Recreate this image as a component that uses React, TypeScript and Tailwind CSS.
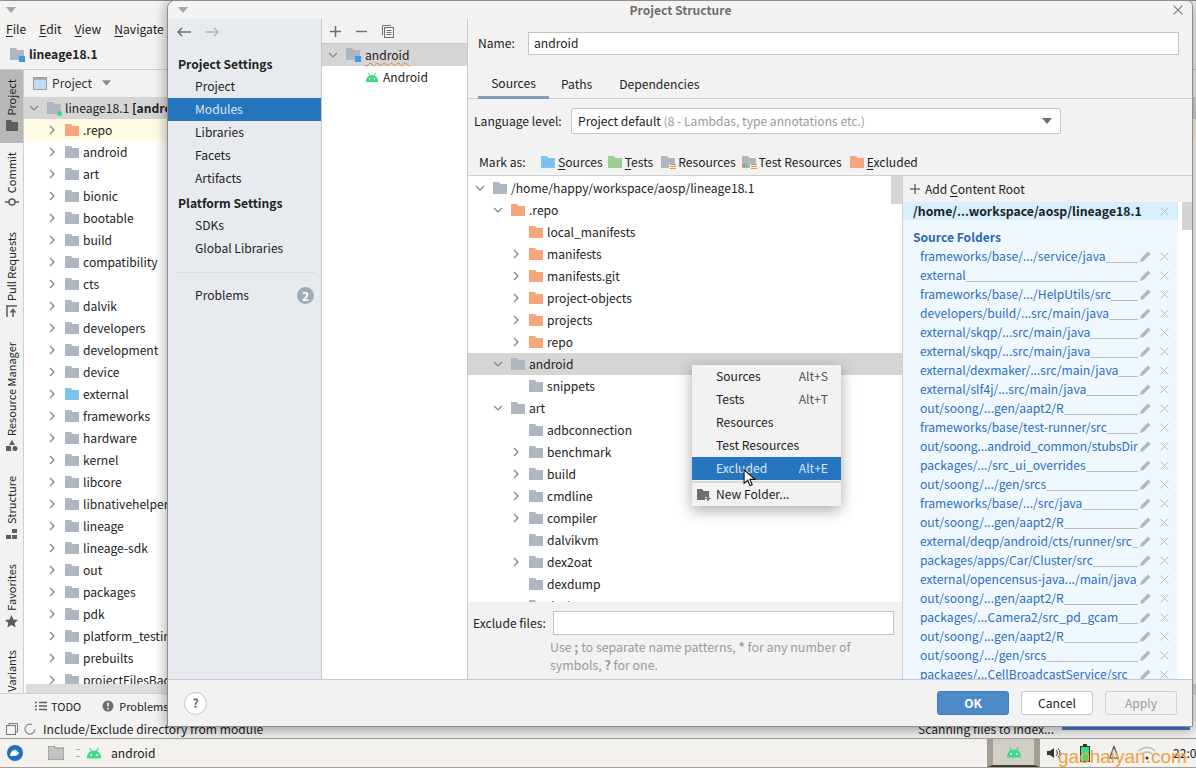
import React from 'react';

function Chevron({ open = false }: { open?: boolean }) {
  return (
    <svg width="10" height="10" viewBox="0 0 10 10" className="shrink-0">
      <path d={open ? 'M1 3l4 4 4-4' : 'M3 1l4 4-4 4'} fill="none" stroke="#7f8488" strokeWidth="1.2" />
    </svg>
  );
}

function Folder({ tone = 'gray' }: { tone?: 'gray' | 'orange' | 'blue' | 'green' }) {
  const fill = { gray: '#afb8c1', orange: '#f6a67c', blue: '#7fc5ee', green: '#9dcd92' }[tone];
  return (
    <svg width="14" height="12" viewBox="0 0 14 12" className="shrink-0">
      <path d="M0 0h6l1.5 2H14v10H0z" fill={fill} />
      {tone === 'blue' && <path d="M2 4h1M5 4h1M8 4h1M11 4h1M3.500 6.500h1M6.500 6.500h1M9.500 6.500h1M2 9h1M5 9h1M8 9h1M11 9h1" stroke="#5aa9dc" strokeWidth="1" />}
    </svg>
  );
}

function ResFolder({ test = false }: { test?: boolean }) {
  return (
    <svg width="14" height="12" viewBox="0 0 14 12" className="shrink-0 overflow-visible">
      <path d="M0 0h6l1.5 2H14v6H8v4H0z" fill="#afb8c1" />
      <path d="M9 8.500h6M9 10.500h6M9 12.500h6" stroke="#e8923c" strokeWidth="1" />
      {test && <path d="M4 7l3 2.500-3 2.500z" fill="#3ddc84" />}
      {test && <path d="M3 7L0 9.500 3 12z" fill="#e8763c" />}
    </svg>
  );
}

function ModuleIcon() {
  return (
    <svg width="15" height="14" viewBox="0 0 15 14" className="shrink-0">
      <path d="M0 0h6l1.5 2H14v10H0z" fill="#afb8c1" />
      <rect x="9" y="8" width="6" height="6" fill="#3d9ae8" />
    </svg>
  );
}

function Android({ size = 14 }: { size?: number }) {
  return (
    <svg width={size} height={size * 0.72} viewBox="0 0 18 13" className="shrink-0">
      <path d="M1 13C1 8 4 4 9 4s8 4 8 9z" fill="#3ddc84" />
      <path d="M4 1l2.5 4M14 1l-2.5 4" stroke="#3ddc84" strokeWidth="1.2" />
      <circle cx="5.8" cy="9" r="1" fill="#fff" />
      <circle cx="12.2" cy="9" r="1" fill="#fff" />
    </svg>
  );
}

function Pencil() {
  return (
    <svg width="11" height="11" viewBox="0 0 11 11" className="shrink-0">
      <path d="M0 11l1-3.5L8 .5 10.500 3l-7 7z" fill="#b5b8ba" />
    </svg>
  );
}

function Cross({ size = 9, color = '#b9bdc0' }: { size?: number; color?: string }) {
  return (
    <svg width={size} height={size} viewBox="0 0 9 9" className="shrink-0">
      <path d="M.5.5l8 8M8.500.5l-8 8" stroke={color} strokeWidth="1" />
    </svg>
  );
}

const projectItems = [
  '.repo', 'android', 'art', 'bionic', 'bootable', 'build', 'compatibility', 'cts', 'dalvik', 'developers',
  'development', 'device', 'external', 'frameworks', 'hardware', 'kernel', 'libcore', 'libnativehelper', 'lineage',
  'lineage-sdk', 'out', 'packages', 'pdk', 'platform_testing', 'prebuilts', 'projectFilesBackup',
];

const sideTabs = [
  { label: 'Project', h: 'h-[73px] bg-[#b8b8b8]', icon: <svg width="12" height="11" viewBox="0 0 12 11"><path d="M0 0h5l1 2h6v9H0z" fill="#5d5d5d" /></svg> },
  { label: 'Commit', h: 'h-[80px]', icon: <svg width="14" height="10" viewBox="0 0 14 10"><circle cx="7" cy="5" r="3" fill="none" stroke="#5d5d5d" strokeWidth="1.500" /><path d="M0 5h4M10 5h4" stroke="#5d5d5d" strokeWidth="1.500" /></svg> },
  { label: 'Pull Requests', h: 'h-[110px]', icon: <svg width="12" height="12" viewBox="0 0 12 12"><path d="M1 0v12M1 1h10M7 12V5M4.500 7.500L7 4.500l2.500 3" fill="none" stroke="#5d5d5d" strokeWidth="1.500" /></svg> },
  { label: 'Resource Manager', h: 'h-[134px]', icon: <svg width="12" height="12" viewBox="0 0 12 12"><path d="M6 0l3 5H3z" fill="#5d5d5d" /><rect x="0" y="6" width="5" height="5" fill="#5d5d5d" /><circle cx="9" cy="8.500" r="2.500" fill="#5d5d5d" /></svg> },
  { label: 'Structure', h: 'h-[88px]', icon: <svg width="12" height="12" viewBox="0 0 12 12"><rect x="6" y="1" width="5" height="4" fill="#5d5d5d" /><rect x="0" y="7" width="5" height="4" fill="#5d5d5d" /><rect x="6" y="7" width="5" height="4" fill="#5d5d5d" /></svg> },
  { label: 'Favorites', h: 'h-[86px]', icon: <svg width="13" height="13" viewBox="0 0 13 13"><path d="M6.500 0l2 4.500 4.500.5-3.300 3 1 4.500-4.200-2.400L2.300 12.500l1-4.500L0 5l4.500-.5z" fill="#5d5d5d" /></svg> },
  { label: 'Variants', h: 'h-[52px]', icon: null },
];

type Node = { name: string; depth: 0 | 1 | 2; tone: 'gray' | 'orange'; arrow?: 'open' | 'closed'; active?: boolean };

const contentTree: Node[] = [
  { name: '/home/happy/workspace/aosp/lineage18.1', depth: 0, tone: 'gray', arrow: 'open' },
  { name: '.repo', depth: 1, tone: 'orange', arrow: 'open' },
  { name: 'local_manifests', depth: 2, tone: 'orange' },
  { name: 'manifests', depth: 2, tone: 'orange', arrow: 'closed' },
  { name: 'manifests.git', depth: 2, tone: 'orange', arrow: 'closed' },
  { name: 'project-objects', depth: 2, tone: 'orange', arrow: 'closed' },
  { name: 'projects', depth: 2, tone: 'orange', arrow: 'closed' },
  { name: 'repo', depth: 2, tone: 'orange', arrow: 'closed' },
  { name: 'android', depth: 1, tone: 'gray', arrow: 'open', active: true },
  { name: 'snippets', depth: 2, tone: 'gray' },
  { name: 'art', depth: 1, tone: 'gray', arrow: 'open' },
  { name: 'adbconnection', depth: 2, tone: 'gray' },
  { name: 'benchmark', depth: 2, tone: 'gray', arrow: 'closed' },
  { name: 'build', depth: 2, tone: 'gray', arrow: 'closed' },
  { name: 'cmdline', depth: 2, tone: 'gray', arrow: 'closed' },
  { name: 'compiler', depth: 2, tone: 'gray', arrow: 'closed' },
  { name: 'dalvikvm', depth: 2, tone: 'gray' },
  { name: 'dex2oat', depth: 2, tone: 'gray', arrow: 'closed' },
  { name: 'dexdump', depth: 2, tone: 'gray' },
  { name: 'dexlayout', depth: 2, tone: 'gray' },
];

const sourceFolders = [
  'frameworks/base/.../service/java', 'external', 'frameworks/base/.../HelpUtils/src', 'developers/build/...src/main/java',
  'external/skqp/...src/main/java', 'external/skqp/...src/main/java', 'external/dexmaker/...src/main/java',
  'external/slf4j/...src/main/java', 'out/soong/...gen/aapt2/R', 'frameworks/base/test-runner/src',
  'out/soong...android_common/stubsDir', 'packages/.../src_ui_overrides', 'out/soong/.../gen/srcs',
  'frameworks/base/.../src/java', 'out/soong/...gen/aapt2/R', 'external/deqp/android/cts/runner/src',
  'packages/apps/Car/Cluster/src', 'external/opencensus-java.../main/java', 'out/soong/...gen/aapt2/R',
  'packages/...Camera2/src_pd_gcam', 'out/soong/...gen/aapt2/R', 'out/soong/.../gen/srcs',
  'packages/...CellBroadcastService/src',
];

function Mnemonic({ text }: { text: string }) {
  return (
    <span>
      <span className="underline underline-offset-2">{text[0]}</span>
      {text.slice(1)}
    </span>
  );
}

function ProjectPanel() {
  return (
    <div className="relative flex-1 min-w-0 bg-white flex flex-col">
      <div className="h-[27px] shrink-0 bg-[#f2f2f2] flex items-center pl-[9px] pb-[1px] gap-[5px] text-[#333]">
        <svg width="14" height="13" viewBox="0 0 14 13"><rect x=".5" y=".5" width="13" height="12" fill="#bfe0f3" stroke="#9aa0a6" /><rect x="1" y="1" width="12" height="2" fill="#a5abb0" /></svg>
        <span>Project</span>
        <svg width="9" height="6" viewBox="0 0 10 6" className="ml-[5px]"><path d="M0 0h10L5 6z" fill="#8c8c8c" /></svg>
      </div>
      <div className="h-[22px] shrink-0 bg-[#d5d5d5] flex items-center pl-[5px]">
        <Chevron open />
        <span className="relative ml-[8px] mr-[4px]">
          <Folder />
          <span className="absolute -right-[1px] -bottom-[2px] size-[5px] rounded-full bg-[#3ddc84]" />
        </span>
        <span className="whitespace-nowrap">lineage18.1 <b>[android]</b></span>
      </div>
      {projectItems.map((name, i) => (
        <div key={name} className={`h-[22px] shrink-0 flex items-center pl-[23px] ${i === 0 ? 'bg-[#fffbe3]' : ''}`}>
          <Chevron />
          <span className="ml-[8px] mr-[4px]"><Folder tone={name === '.repo' ? 'orange' : name === 'external' ? 'blue' : 'gray'} /></span>
          <span className="whitespace-nowrap">{name}</span>
        </div>
      ))}
      <div className="absolute left-[2px] right-0 bottom-0 h-[9px] bg-[#dddddd]" />
    </div>
  );
}

function ContextMenu() {
  const rows = [
    { label: 'Sources', key: 'Alt+S' },
    { label: 'Tests', key: 'Alt+T' },
    { label: 'Resources', key: '' },
    { label: 'Test Resources', key: '' },
    { label: 'Excluded', key: 'Alt+E', active: true },
  ];
  return (
    <div className="absolute left-[524px] top-[364px] w-[149px] bg-[#f2f2f2] shadow-[0_4px_14px_rgba(0,0,0,0.35)] z-20">
      {rows.map((r) => (
        <div key={r.label} className={`h-[23px] flex items-center justify-between pl-[24px] pr-[13px] ${r.active ? 'bg-[#2675bf] text-[#dbe7f3]' : 'text-[#222]'}`}>
          <span>{r.label}</span>
          <span className={r.active ? '' : 'text-[#555]'}>{r.key}</span>
        </div>
      ))}
      <div className="h-[2px] mt-[1px] bg-[#d8d8d8]" />
      <div className="h-[23px] flex items-center pl-[5px] gap-[5px]">
        <svg width="14" height="12" viewBox="0 0 14 12" className="shrink-0"><path d="M0 0h5l1.500 2H12v6H8v3H0z" fill="#6e6e6e" /><path d="M11 7v5M8.500 9.500h5" stroke="#6e6e6e" strokeWidth="1.500" /></svg>
        <span>New Folder...</span>
      </div>
      <svg width="13" height="18" viewBox="0 0 14 20" className="absolute left-[51px] top-[104px]">
        <path d="M1 1v15l4-3.500 2.500 6 2.500-1-2.500-6H13z" fill="#fff" stroke="#111" strokeWidth="1.200" />
      </svg>
    </div>
  );
}

function Dialog() {
  return (
    <div className="absolute left-[167px] top-0 w-[1026px] h-[727px] flex flex-col bg-[#f2f2f2] border border-[#8e8e8e] rounded-tl-[8px] rounded-tr-[6px] shadow-[0_2px_14px_rgba(0,0,0,0.4)] z-10">
      <div className="h-[18px] shrink-0 flex items-center justify-between pl-[10px] pr-[9px] bg-[#f5f3f1] rounded-t-[8px]">
        <svg width="10" height="6" viewBox="0 0 10 6"><path d="M0 0h10L5 6z" fill="#a5a5a5" /></svg>
        <span className="font-bold text-[#6e6e6e]">Project Structure</span>
        <Cross size={10} color="#7b7b7b" />
      </div>
      <div className="flex-1 min-h-0 flex">
        <div className="w-[154px] shrink-0 bg-[#e7ebf0] border-r border-[#c9c9c9] flex flex-col">
          <div className="h-[28px] pb-[2px] flex items-center pl-[9px] gap-[14px]">
            <svg width="14" height="10" viewBox="0 0 14 10"><path d="M14 5H1M5 1L1 5l4 4" fill="none" stroke="#6f6f6f" strokeWidth="1.500" /></svg>
            <svg width="14" height="10" viewBox="0 0 14 10"><path d="M0 5h13M9 1l4 4-4 4" fill="none" stroke="#b5b5b5" strokeWidth="1.500" /></svg>
          </div>
          <div className="pl-[10px] mt-[6px] h-[22px] flex items-center font-bold">Project Settings</div>
          {['Project', 'Modules', 'Libraries', 'Facets', 'Artifacts'].map((n) => (
            <div key={n} className={`h-[23px] flex items-center pl-[27px] ${n === 'Modules' ? 'bg-[#2675bf] text-[#dbe7f3]' : ''}`}>{n}</div>
          ))}
          <div className="pl-[10px] mt-[2px] h-[22px] flex items-center font-bold">Platform Settings</div>
          {['SDKs', 'Global Libraries'].map((n) => (
            <div key={n} className="h-[23px] flex items-center pl-[27px]">{n}</div>
          ))}
          <div className="mx-[6px] mt-[12px] h-px bg-[#dcdcdc]" />
          <div className="h-[23px] mt-[11px] flex items-center justify-between pl-[27px] pr-[7px]">
            <span>Problems</span>
            <span className="size-[17px] rounded-full bg-[#9fabb8] text-white font-bold text-[12px] flex items-center justify-center">2</span>
          </div>
        </div>
        <div className="w-[146px] shrink-0 bg-white border-r border-[#c9c9c9] flex flex-col">
          <div className="h-[25px] shrink-0 bg-[#f2f2f2] border-b border-[#c9c9c9] flex items-center pl-[8px] gap-[15px]">
            <svg width="11" height="11" viewBox="0 0 11 11"><path d="M5.500 0v11M0 5.500h11" stroke="#6e6e6e" strokeWidth="1.500" /></svg>
            <svg width="11" height="11" viewBox="0 0 11 11"><path d="M0 5.500h11" stroke="#6e6e6e" strokeWidth="1.500" /></svg>
            <svg width="12" height="13" viewBox="0 0 12 13"><path d="M.5 10V.5H9" fill="none" stroke="#6e6e6e" /><rect x="2.500" y="2.500" width="9" height="10" fill="none" stroke="#6e6e6e" /><path d="M4.500 5.500h5M4.500 7.500h5M4.500 9.500h5" stroke="#6e6e6e" /></svg>
          </div>
          <div className="h-[22px] bg-[#d5d5d5] flex items-center pl-[6px] gap-[9px]">
            <Chevron open />
            <span className="flex items-center gap-[4px] -ml-[1px]">
              <ModuleIcon />
              <span className="underline decoration-wavy decoration-[#e0803c] decoration-1 underline-offset-2">android</span>
            </span>
          </div>
          <div className="h-[22px] flex items-center pl-[43px] gap-[4px]">
            <Android />
            <span>Android</span>
          </div>
        </div>
        <div className="flex-1 min-w-0 flex flex-col">
          <div className="h-[49px] shrink-0 flex items-center pl-[10px] pr-[13px] gap-[11px]">
            <span className="w-[39px]">Name:</span>
            <div className="flex-1 h-[23px] bg-white border border-[#c4c4c4] flex items-center px-[5px]">android</div>
          </div>
          <div className="h-[31px] shrink-0 border-b border-[#cfcfcf] flex items-end pl-[10px] gap-[12px]">
            <div className="h-[28px] w-[71px] border-b-[3px] border-[#7f9cc0] flex items-center justify-center -mb-px">Sources</div>
            <div className="h-[28px] flex items-center mr-[15px]">Paths</div>
            <div className="h-[28px] flex items-center">Dependencies</div>
          </div>
          <div className="h-[44px] shrink-0 flex items-center pl-[6px]">
            <span className="w-[97px]">Language level:</span>
            <div className="w-[490px] h-[26px] bg-white border border-[#c4c4c4] rounded-[2px] flex items-center justify-between pl-[6px] pr-[8px]">
              <span>Project default <span className="text-[#9a9a9a]">(8 - Lambdas, type annotations etc.)</span></span>
              <svg width="10" height="6" viewBox="0 0 10 6"><path d="M0 0h10L5 6z" fill="#6e6e6e" /></svg>
            </div>
          </div>
          <div className="h-[33px] pt-[6px] shrink-0 border-b border-[#cfcfcf] flex items-center pl-[11px]">
            <span className="w-[62px]">Mark as:</span>
            <span className="flex items-center gap-[3px] mr-[5px]"><Folder tone="blue" /><Mnemonic text="Sources" /></span>
            <span className="flex items-center gap-[3px] mr-[8px]"><Folder tone="green" /><Mnemonic text="Tests" /></span>
            <span className="flex items-center gap-[3px] mr-[6px]"><ResFolder />Resources</span>
            <span className="flex items-center gap-[3px] mr-[8px]"><ResFolder test />Test Resources</span>
            <span className="flex items-center gap-[3px]"><Folder tone="orange" /><Mnemonic text="Excluded" /></span>
          </div>
          <div className="flex-1 min-h-0 flex">
            <div className="w-[435px] shrink-0 flex flex-col border-r border-[#cfcfcf]">
              <div className="relative flex-1 min-h-0 bg-white overflow-hidden pt-[1px]">
                {contentTree.map((n) => (
                  <div key={n.name} className={`h-[22px] flex items-center ${n.active ? 'bg-[#d5d5d5]' : ''} ${n.depth === 0 ? 'pl-[7px]' : n.depth === 1 ? 'pl-[25px]' : 'pl-[43px]'}`}>
                    <span className="w-[10px] shrink-0">{n.arrow && <Chevron open={n.arrow === 'open'} />}</span>
                    <span className="ml-[8px] mr-[4px]"><Folder tone={n.tone} /></span>
                    <span className="whitespace-nowrap">{n.name}</span>
                  </div>
                ))}
                <div className="absolute right-0 top-0 w-[11px] h-[28px] bg-[#d4d4d4]" />
              </div>
              <div className="h-[77px] shrink-0 bg-[#f2f2f2]">
                <div className="h-[40px] flex items-center pl-[5px] pr-[8px] gap-[5px] pt-[2px]">
                  <span className="w-[75px]">Exclude files:</span>
                  <div className="flex-1 h-[24px] bg-white border border-[#c4c4c4]" />
                </div>
                <div className="pl-[82px] -mt-[4px] text-[#9a9a9a] text-[12.4px] leading-[18px]">
                  Use <b>;</b> to separate name patterns, <b>*</b> for any number of<br />symbols, <b>?</b> for one.
                </div>
              </div>
            </div>
            <div className="flex-1 min-w-0 flex flex-col">
              <div className="h-[26px] shrink-0 flex items-center pl-[7px] gap-[5px]">
                <svg width="10" height="10" viewBox="0 0 10 10"><path d="M5 0v10M0 5h10" stroke="#6e6e6e" strokeWidth="1.500" /></svg>
                <span>Add <span className="underline underline-offset-2">C</span>ontent Root</span>
              </div>
              <div className="flex-1 min-h-0 flex bg-white">
                <div className="w-[275px] shrink-0 bg-[#f0f8ff] overflow-hidden">
                  <div className="h-[18px] bg-[#d7eefc] flex items-center justify-between pl-[10px] pr-[9px] font-bold text-[#222] text-[12.3px]">
                    <span>/home/...workspace/aosp/lineage18.1</span>
                    <Cross />
                  </div>
                  <div className="h-[26px] flex items-end pl-[10px] font-bold text-[#2a68b4]">Source Folders</div>
                  <div className="pt-[1px]">
                    {sourceFolders.map((s, i) => (
                      <div key={i} className="h-[19px] flex items-center pl-[17px] pr-[9px] text-[#2a6fc0]">
                        <span className="flex-1 min-w-0 flex items-end overflow-hidden">
                          <span className={`whitespace-nowrap ${s.includes('stubsDir') ? 'tracking-[-0.12px]' : ''}`}>{s}</span>
                          <span className="flex-1 border-b border-[#bcbcbc] mb-[3px]" />
                        </span>
                        <span className="ml-[2px]"><Pencil /></span>
                        <span className="ml-[9px]"><Cross /></span>
                      </div>
                    ))}
                  </div>
                </div>
                <div className="flex-1 bg-white pl-[4px]"><div className="h-[28px] bg-[#d4d4d4]" /></div>
              </div>
            </div>
          </div>
        </div>
      </div>
      <div className="h-[47px] shrink-0 bg-[#f2f2f2] border-t border-[#c9c9c9] flex items-center pl-[16px] pr-[15px]">
        <span className="size-[23px] rounded-full bg-white border border-[#c4c4c4] flex items-center justify-center font-bold text-[#666]">?</span>
        <span className="ml-auto w-[72px] h-[24px] rounded-[3px] bg-[#4d8ac9] border border-[#3f7cbc] text-white font-bold flex items-center justify-center">OK</span>
        <span className="ml-[12px] w-[72px] h-[24px] rounded-[3px] bg-white border border-[#c4c4c4] flex items-center justify-center">Cancel</span>
        <span className="ml-[12px] w-[72px] h-[24px] rounded-[3px] border border-[#cfcfcf] text-[#9a9a9a] flex items-center justify-center">Apply</span>
      </div>
      <ContextMenu />
    </div>
  );
}

export default function App() {
  return (
    <div className="relative w-[1196px] h-[768px] overflow-hidden bg-[#f2f2f2] text-[12.1px] text-[#222] font-['Noto_Sans_CJK_SC','Noto_Sans',sans-serif] flex flex-col">
      <div className="h-[17px] shrink-0 bg-[#f5f3f1] border-t border-[#8e8e8e] pl-[6px] pt-[6px]">
        <svg width="10" height="6" viewBox="0 0 10 6"><path d="M0 0h10L5 6z" fill="#a5a5a5" /></svg>
      </div>
      <div className="h-[25px] shrink-0 bg-[#f5f3f1] flex items-center pl-[6px] gap-[13px]">
        {['File', 'Edit', 'View', 'Navigate'].map((m) => <Mnemonic key={m} text={m} />)}
      </div>
      <div className="h-[28px] pb-[2px] shrink-0 bg-[#f2f2f2] border-b border-[#cfcfcf] flex items-center pl-[10px] gap-[4px] font-bold">
        <ModuleIcon />
        <span>lineage18.1</span>
      </div>
      <div className="flex-1 min-h-0 flex">
        <div className="w-[24px] shrink-0 border-r border-[#cfcfcf] text-[11px] overflow-hidden">
          {sideTabs.map((t) => (
            <div key={t.label} className={`${t.h} flex flex-col items-center pt-[9px] gap-[4px]`}>
              <span className="[writing-mode:vertical-rl] rotate-180 whitespace-nowrap">{t.label}</span>
              {t.icon}
            </div>
          ))}
        </div>
        <ProjectPanel />
      </div>
      <div className="h-[25px] shrink-0 border-t border-[#cfcfcf] flex items-center pl-[35px] text-[11px]">
        <svg width="12" height="10" viewBox="0 0 12 10" className="mr-[4px]"><path d="M0 1.500h2M4 1.500h8M0 5h2M4 5h8M0 8.500h2M4 8.500h8" stroke="#5d5d5d" strokeWidth="1.500" /></svg>
        <span>TODO</span>
        <svg width="12" height="12" viewBox="0 0 12 12" className="ml-[21px] mr-[5px]"><circle cx="6" cy="6" r="5.500" fill="#6e6e6e" /><path d="M6 2.500v4M6 8v1.500" stroke="#fff" strokeWidth="1.500" /></svg>
        <span>Problems</span>
      </div>
      <div className="h-[20px] pt-[2px] shrink-0 flex items-center pl-[6px]">
        <svg width="12" height="12" viewBox="0 0 12 12" className="mr-[6px]"><rect x=".5" y="2.500" width="9" height="9" fill="none" stroke="#777" /><path d="M3 2V.5h8.500V9H10" fill="none" stroke="#777" /></svg>
        <svg width="12" height="12" viewBox="0 0 12 12" className="mr-[7px]"><path d="M11 6a5 5 0 1 1-3-4.500" fill="none" stroke="#8a8a8a" strokeWidth="1.200" /></svg>
        <span>Include/Exclude directory from module</span>
        <span className="ml-auto mr-[142px]">Scanning files to index...</span>
        <span className="absolute left-[1062px] top-[727px] w-[128px] h-[3px] bg-[#3d7fc9]" />
      </div>
      <div className="h-[30px] shrink-0 bg-[#f4f2ef] border-y border-[#a59e95] flex items-center pl-[7px]">
        <svg width="16" height="16" viewBox="0 0 16 16" className="shrink-0">
          <circle cx="8" cy="8" r="8" fill="#1f6fc4" />
          <path d="M3 11c0-3 2-5 3-6l1 1 1-2 1 2 2-1-1 2 2 0c0 2-2 4-5 4z" fill="#fff" />
        </svg>
        <svg width="16" height="14" viewBox="0 0 16 14" className="ml-[25px]"><path d="M0 0h6l1.500 2H16v12H0z" fill="#c4c4c4" stroke="#8a8a8a" /></svg>
        <span className="ml-[12px] w-[4px] h-[8px] border-y border-[#b0b0b0]" />
        <span className="ml-[6px]"><Android size={16} /></span>
        <span className="ml-[9px]">android</span>
        <span className="ml-auto mr-[156px] w-[53px] h-[28px] bg-[#d2cec8] border-x-[6px] border-[#a59e95] border-b-2 border-b-[#3f3b36] flex items-center justify-center"><Android size={16} /></span>
      </div>
      <div className="absolute left-[1047px] top-[738px] h-[30px] flex items-center">
        <svg width="14" height="12" viewBox="0 0 14 12" className="shrink-0"><path d="M0 4h3l4-3v10L3 8H0z" fill="#333" /><path d="M9 3a4 4 0 0 1 0 6M11 1.500a6 6 0 0 1 0 9" fill="none" stroke="#333" /></svg>
        <svg width="10" height="18" viewBox="0 0 10 18" className="shrink-0 ml-[19px]"><rect x=".5" y="2.500" width="9" height="15" fill="#3ddc84" stroke="#333" /><rect x="3" y="0" width="4" height="2" fill="#333" /></svg>
        <svg width="10" height="14" viewBox="0 0 12 16" className="shrink-0 ml-[19px]"><path d="M6 0L1 14h10z" fill="none" stroke="#555" strokeWidth="1.500" /></svg>
        <svg width="18" height="14" viewBox="0 0 18 14" className="shrink-0 ml-[19px]"><path d="M1 5a11 11 0 0 1 16 0M4 8a7 7 0 0 1 10 0" fill="none" stroke="#bbb" strokeWidth="1.500" /><circle cx="9" cy="12" r="1.500" fill="#333" /></svg>
        <span className="whitespace-nowrap ml-[17px]">22:0</span>
      </div>
      <span className="absolute left-[1058px] top-[745px] text-[19px] leading-[24px] text-[#f0a040] font-['Liberation_Sans',sans-serif] z-20 whitespace-nowrap">gaohaiyan.com</span>
      <Dialog />
    </div>
  );
}
